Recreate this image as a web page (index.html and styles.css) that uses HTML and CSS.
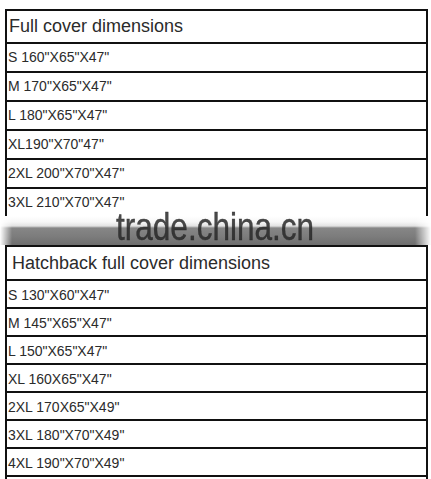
FILE: index.html
```html
<!DOCTYPE html>
<html>
<head>
<meta charset="utf-8">
<link rel="stylesheet" href="styles.css">
</head>
<body>
<div class="page">
  <div class="sheet sheet-top">
    <div class="head">Full cover dimensions</div>
    <div class="row">S 160"X65"X47"</div>
    <div class="row">M 170"X65"X47"</div>
    <div class="row">L 180"X65"X47"</div>
    <div class="row">XL190"X70"47"</div>
    <div class="row">2XL 200"X70"X47"</div>
    <div class="row last">3XL 210"X70"X47"</div>
  </div>
  <div class="band"></div>
  <div class="sheet sheet-bottom">
    <div class="head head-b">Hatchback full cover dimensions</div>
    <div class="row row-b">S 130"X60"X47"</div>
    <div class="row row-b">M 145"X65"X47"</div>
    <div class="row row-b">L 150"X65"X47"</div>
    <div class="row row-b">XL 160X65"X47"</div>
    <div class="row row-b">2XL 170X65"X49"</div>
    <div class="row row-b">3XL 180"X70"X49"</div>
    <div class="row row-b">4XL 190"X70"X49"</div>
    <div class="row row-b"></div>
  </div>
  <div class="watermark">trade.china.cn</div>
</div>
</body>
</html>
```

FILE: styles.css
```css
html, body {
  margin: 0;
  padding: 0;
  background: #fff;
}
body {
  font-family: Arial, "Liberation Sans", sans-serif;
  color: #2b2b2b;
  overflow: hidden;
}
.page {
  position: relative;
  padding-top: 9px;
  width: 431px;
  height: 479px;
  overflow: hidden;
}
.sheet {
  margin-left: 5px;
  width: 419px;
  border: 2px solid #111;
}
.sheet-top {
  border-bottom: none;
}
.head {
  height: 31px;
  line-height: 31px;
  font-size: 18px;
  padding-left: 2px;
  border-bottom: 2px solid #111;
  white-space: nowrap;
}
.head-b {
  height: 32px;
  line-height: 32px;
  padding-left: 5px;
}
.row {
  height: 27px;
  line-height: 27px;
  font-size: 14px;
  padding-left: 1px;
  border-bottom: 2px solid #111;
  white-space: nowrap;
}
.row.last {
  border-bottom: none;
}
.row-b {
  height: 23px;
  line-height: 23px;
  padding-top: 3px;
}
.band {
  height: 29px;
  position: relative;
  z-index: 1;
  background: linear-gradient(to bottom, #ffffff 0px, #f6f6f6 6px, #e2e2e2 10px, #868686 12px, #7d7d7d 20px, #6e6e6e 29px);
  -webkit-mask-image: linear-gradient(to right, transparent 0px, #000 12px, #000 calc(100% - 16px), transparent 100%);
  mask-image: linear-gradient(to right, transparent 0px, #000 12px, #000 calc(100% - 16px), transparent 100%);
}
.watermark {
  position: absolute;
  left: 116px;
  top: 207px;
  z-index: 2;
  font-size: 38px;
  line-height: 40px;
  color: rgba(40, 40, 40, 0.85);
  -webkit-text-stroke: 0.4px rgba(40, 40, 40, 0.85);
  transform: scaleX(0.83);
  transform-origin: left top;
  white-space: nowrap;
}
```
